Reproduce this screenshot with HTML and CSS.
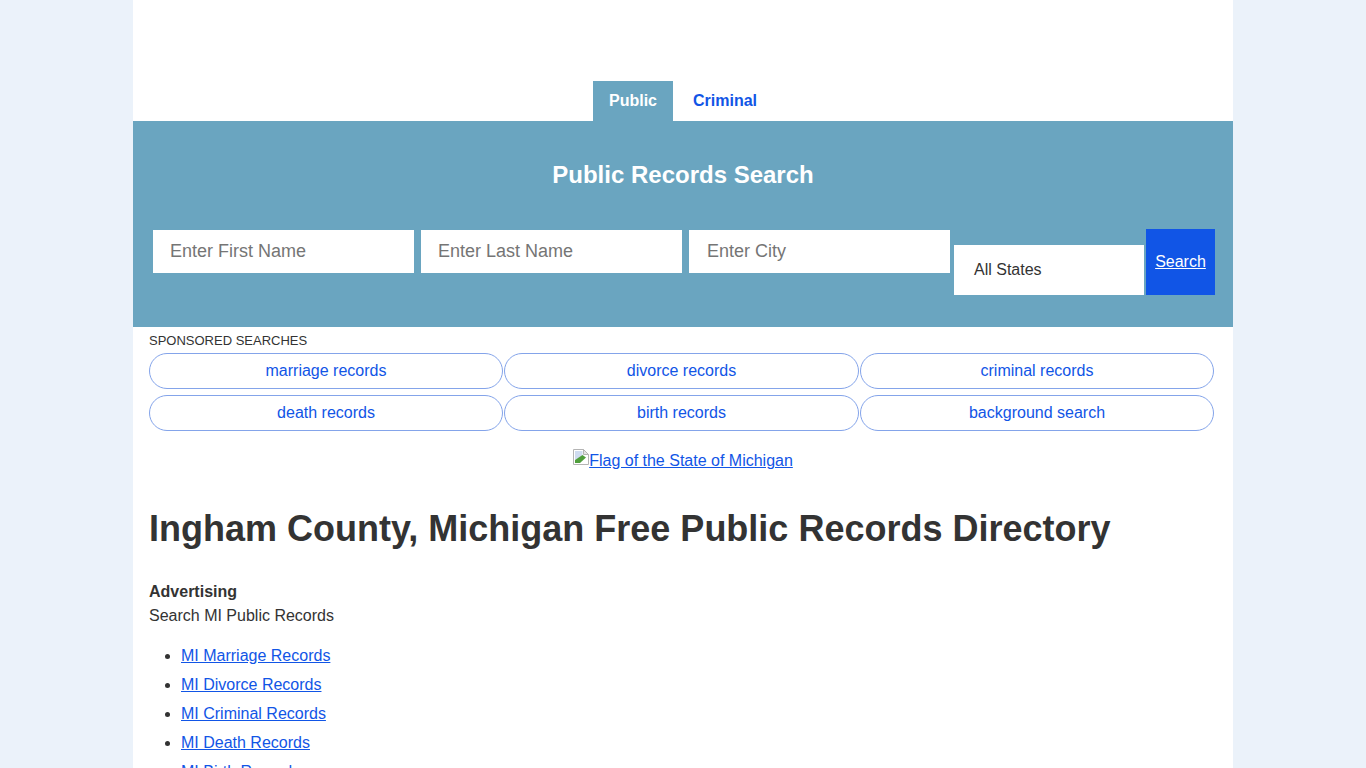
FILE: index.html
```html
<!DOCTYPE html>
<html lang="en">
<head>
<meta charset="utf-8">
<title>Ingham County, Michigan Free Public Records Directory</title>
<link rel="stylesheet" href="styles.css">
</head>
<body>
<div class="page">
  <nav class="tabs">
    <a class="tab active" href="#">Public</a>
    <a class="tab" href="#">Criminal</a>
  </nav>
  <section class="search">
    <h2 class="search-title">Public Records Search</h2>
    <form class="search-form">
      <input class="field" type="text" placeholder="Enter First Name">
      <input class="field" type="text" placeholder="Enter Last Name">
      <input class="field" type="text" placeholder="Enter City">
      <div class="state">All States</div>
      <a class="go" href="#">Search</a>
    </form>
  </section>
  <main class="content">
    <div class="sponsored-label">SPONSORED SEARCHES</div>
    <div class="pills">
      <a class="pill" href="#">marriage records</a>
      <a class="pill" href="#">divorce records</a>
      <a class="pill" href="#">criminal records</a>
      <a class="pill" href="#">death records</a>
      <a class="pill" href="#">birth records</a>
      <a class="pill" href="#">background search</a>
    </div>
    <div class="flag">
      <a class="flag-link" href="#"><svg class="broken" width="16" height="16" viewBox="0 0 16 16" aria-hidden="true"><path d="M.5 .5H10.5L15.5 5.5V15.5H.5Z" fill="#fff" stroke="#b4b4b4"/><path d="M10.5 .5V5.5H15.5Z" fill="#e4e4e4" stroke="#b4b4b4"/><path d="M2 2H9.5V7L2 11Z" fill="#cfdcf0"/><path d="M2 14V11L9.5 6L13 8.5L7 14Z" fill="#4f9e3c"/></svg>Flag of the State of Michigan</a>
    </div>
    <h1 class="title">Ingham County, Michigan Free Public Records Directory</h1>
    <p class="ad"><strong>Advertising</strong><br>Search MI Public Records</p>
    <ul class="links">
      <li><a href="#">MI Marriage Records</a></li>
      <li><a href="#">MI Divorce Records</a></li>
      <li><a href="#">MI Criminal Records</a></li>
      <li><a href="#">MI Death Records</a></li>
      <li><a href="#">MI Birth Records</a></li>
    </ul>
  </main>
</div>
</body>
</html>
```
FILE: styles.css
```css
* { box-sizing: border-box; }
html, body { margin: 0; height: 768px; overflow: hidden; }
body {
  background: #ebf2fa;
  font-family: "Liberation Sans", Arial, sans-serif;
  font-size: 16px;
  color: #333;
}
a { color: #1155e6; }
.page {
  width: 1100px;
  height: 768px;
  margin: 0 auto;
  background: #fff;
  overflow: hidden;
}
.tabs {
  display: flex;
  justify-content: center;
  gap: 4px;
  height: 121px;
  padding-top: 81px;
}
.tab {
  display: block;
  height: 40px;
  padding: 0 16px;
  font-weight: 700;
  line-height: 40px;
  text-decoration: none;
}
.tab.active { background: #6aa5c0; color: #fff; }
.search {
  height: 206px;
  background: #6aa5c0;
  padding-top: 40px;
}
.search-title {
  margin: 0;
  height: 28px;
  line-height: 28px;
  font-size: 24px;
  font-weight: 700;
  text-align: center;
  color: #fff;
}
.search-form {
  display: flex;
  align-items: flex-start;
  margin-top: 40px;
  padding-left: 20px;
}
.field {
  width: 261px;
  height: 43px;
  margin: 1px 7px 0 0;
  border: 0;
  padding: 0 17px;
  font-family: inherit;
  font-size: 18px;
  color: #333;
  background: #fff;
  outline: 0;
}
.field:nth-child(3) { margin-right: 4px; padding-left: 18px; }
.field::placeholder { color: #757575; opacity: 1; }
.state {
  width: 190px;
  height: 50px;
  margin: 16px 2px 0 0;
  padding-left: 20px;
  background: #fff;
  line-height: 49px;
  color: #333;
}
.go {
  width: 69px;
  height: 66px;
  background: #1155e6;
  color: #fff;
  text-align: center;
  line-height: 65px;
}
.content { padding: 0 16px; }
.sponsored-label {
  height: 26px;
  font-size: 13px;
  line-height: 27px;
}
.pills {
  display: grid;
  grid-template-columns: 354px 355px 354px;
  gap: 6px 1px;
  width: 1065px;
}
.pill {
  height: 36px;
  border: 1px solid #84a4ea;
  border-radius: 18px;
  text-align: center;
  line-height: 34px;
  text-decoration: none;
}
.flag {
  margin-top: 18px;
  height: 24px;
  text-align: center;
  line-height: 24px;
}
.broken { vertical-align: 1px; }
.title {
  margin: 0;
  padding-top: 33px;
  height: 107px;
  font-size: 36px;
  line-height: 46px;
  font-weight: 700;
}
.ad { margin: 0; line-height: 24px; }
.links {
  margin: 16px 0 0;
  padding-left: 32px;
}
.links li { height: 29px; line-height: 24px; }
```
